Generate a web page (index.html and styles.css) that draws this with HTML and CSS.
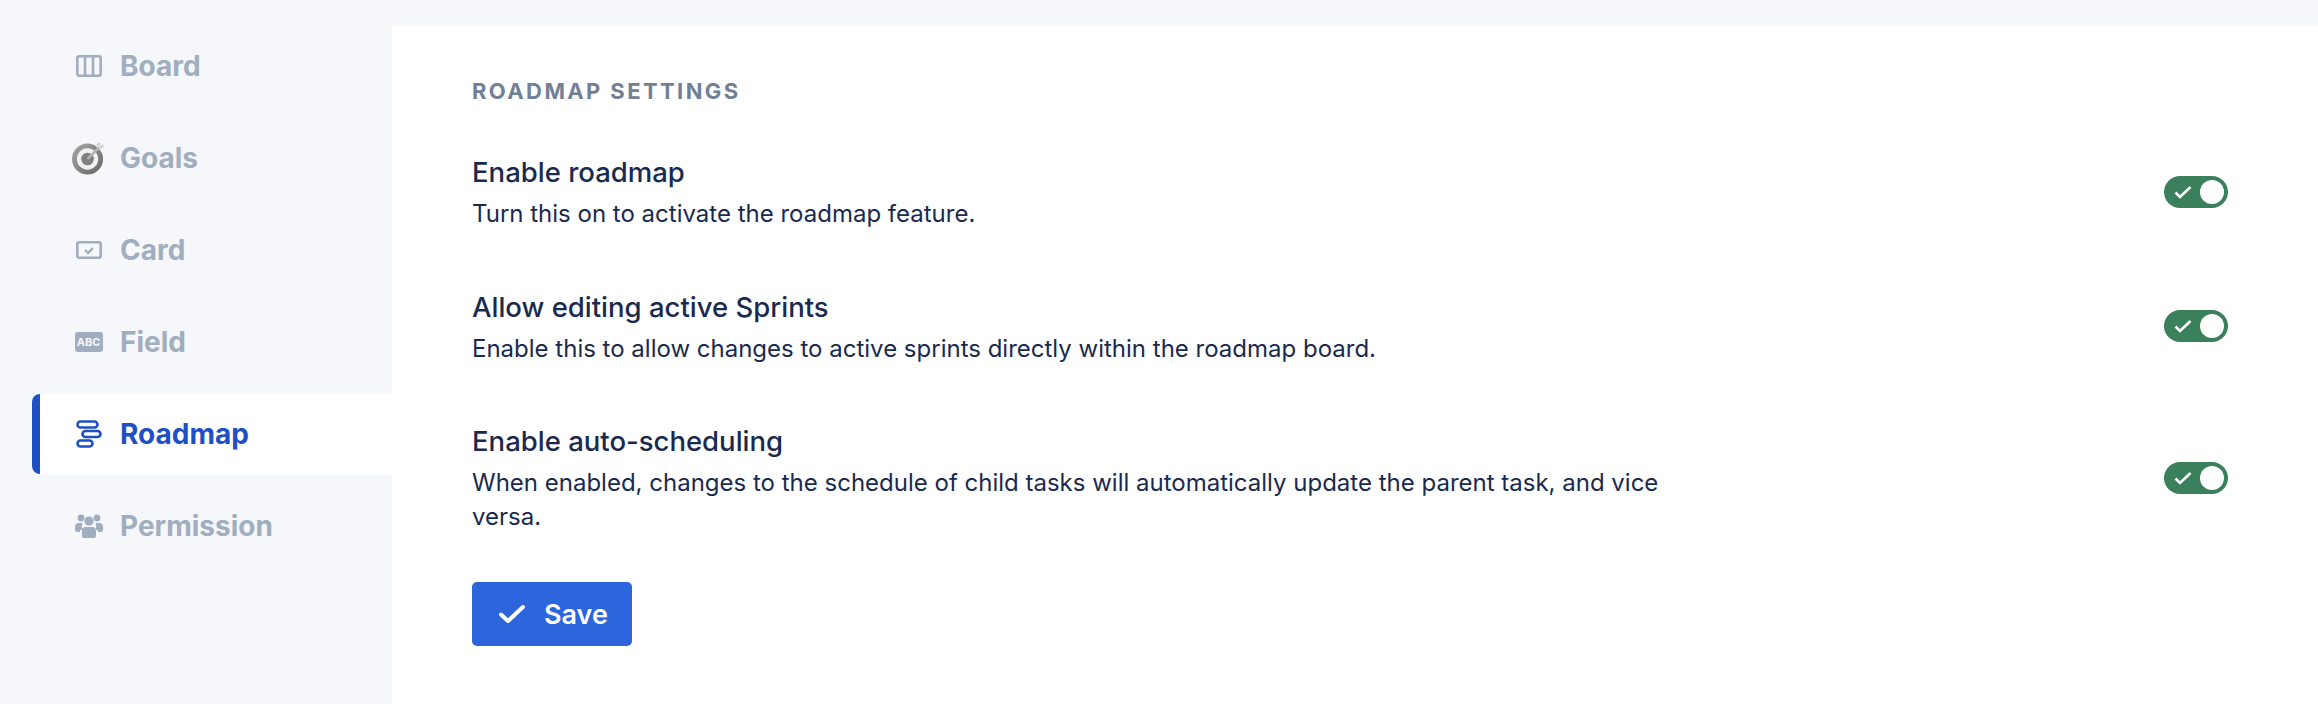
FILE: index.html
```html
<!DOCTYPE html>
<html lang="en">
<head>
<meta charset="utf-8">
<title>Roadmap settings</title>
<link rel="stylesheet" href="styles.css">
</head>
<body>
<div class="layout">
  <nav class="sidebar">
    <a class="nav-item">
      <span class="nav-icon"><svg width="28" height="24" viewBox="0 0 28 24" fill="none" stroke="currentColor" stroke-width="2.6"><rect x="2.3" y="2.3" width="23.4" height="19.4" rx="2"/><path d="M10 2v20M18 2v20"/></svg></span>
      <span>Board</span>
    </a>
    <a class="nav-item">
      <span class="nav-icon"><svg width="34" height="34" viewBox="0 0 34 34" fill="none"><defs><linearGradient id="ring" x1="0" y1="0" x2="1" y2="1"><stop offset="0" stop-color="#a8a8a8"/><stop offset="1" stop-color="#666"/></linearGradient></defs><circle cx="16" cy="18" r="16" fill="url(#ring)"/><circle cx="16" cy="18" r="11" fill="#f1f1f1"/><circle cx="16" cy="18" r="6.5" fill="#808080"/><path d="M22 2 33 13V2z" fill="#f5f7fa"/><path d="M16 18 28 6" stroke="#b5b5b5" stroke-width="2.6"/><path d="M26 4.5 29 1.5M28.5 7 32.5 4" stroke="#d2d2d2" stroke-width="3"/></svg></span>
      <span>Goals</span>
    </a>
    <a class="nav-item">
      <span class="nav-icon"><svg width="26" height="18" viewBox="0 0 26 18" fill="none" stroke="currentColor"><rect x="1.3" y="1.3" width="23.4" height="15.4" rx="2" stroke-width="2.6"/><path d="M9 9l3 3 5-5" stroke-width="2.4"/></svg></span>
      <span>Card</span>
    </a>
    <a class="nav-item">
      <span class="nav-icon abc">ABC</span>
      <span>Field</span>
    </a>
    <a class="nav-item active">
      <span class="nav-icon"><svg width="26" height="28" viewBox="0 0 26 28" fill="none" stroke="currentColor" stroke-width="2.6"><rect x="1.5" y="1.5" width="20" height="6" rx="3"/><rect x="6.5" y="11" width="18" height="6" rx="3"/><rect x="1.5" y="20.5" width="15" height="6" rx="3"/></svg></span>
      <span>Roadmap</span>
    </a>
    <a class="nav-item">
      <span class="nav-icon"><svg width="28" height="24" viewBox="0 0 28 24" fill="currentColor"><circle cx="6" cy="4" r="3.4"/><circle cx="22" cy="4" r="3.4"/><circle cx="14" cy="7" r="4.6"/><path d="M0 13a4 4 0 0 1 4-4h3.5a7 7 0 0 0 .5 7H5v2H2a2 2 0 0 1-2-2zM28 13a4 4 0 0 0-4-4h-3.5a7 7 0 0 1-.5 7h3v2h3a2 2 0 0 0 2-2zM7 17a4 4 0 0 1 4-4h6a4 4 0 0 1 4 4v5a2 2 0 0 1-2 2H9a2 2 0 0 1-2-2z"/></svg></span>
      <span>Permission</span>
    </a>
  </nav>
  <main class="panel">
    <h2 class="heading">ROADMAP SETTINGS</h2>
    <section class="setting">
      <div class="setting-text">
        <h3 class="setting-title">Enable roadmap</h3>
        <p class="setting-desc">Turn this on to activate the roadmap feature.</p>
      </div>
      <span class="toggle"><svg width="18" height="14" viewBox="0 0 18 14" fill="none" stroke="#fff" stroke-width="2.6"><path d="M1.5 7.5 6 12 16.5 2"/></svg><span class="knob"></span></span>
    </section>
    <section class="setting">
      <div class="setting-text">
        <h3 class="setting-title">Allow editing active Sprints</h3>
        <p class="setting-desc">Enable this to allow changes to active sprints directly within the roadmap board.</p>
      </div>
      <span class="toggle"><svg width="18" height="14" viewBox="0 0 18 14" fill="none" stroke="#fff" stroke-width="2.6"><path d="M1.5 7.5 6 12 16.5 2"/></svg><span class="knob"></span></span>
    </section>
    <section class="setting last">
      <div class="setting-text">
        <h3 class="setting-title">Enable auto-scheduling</h3>
        <p class="setting-desc">When enabled, changes to the schedule of child tasks will automatically update the parent task, and vice versa.</p>
      </div>
      <span class="toggle"><svg width="18" height="14" viewBox="0 0 18 14" fill="none" stroke="#fff" stroke-width="2.6"><path d="M1.5 7.5 6 12 16.5 2"/></svg><span class="knob"></span></span>
    </section>
    <button class="save" type="button"><svg width="26" height="20" viewBox="0 0 26 20" fill="none" stroke="#fff" stroke-width="4" stroke-linecap="round" stroke-linejoin="round"><path d="M2 10.5 9 17 24 3"/></svg><span>Save</span></button>
  </main>
</div>
</body>
</html>
```
FILE: styles.css
```css
* { box-sizing: border-box; }
html, body { margin: 0; height: 100%; }
body {
  background: #f5f7fa;
  font-family: Inter, "Liberation Sans", sans-serif;
  overflow: hidden;
}
.layout {
  display: flex;
  height: 704px;
  padding-top: 26px;
}
.sidebar {
  width: 392px;
  flex: none;
  padding-left: 32px;
  display: flex;
  flex-direction: column;
  gap: 12px;
}
.nav-item {
  height: 80px;
  display: flex;
  align-items: center;
  gap: 15px;
  padding-left: 40px;
  font-size: 28px;
  font-weight: 700;
  color: #a0aec0;
}
.nav-icon {
  width: 33px;
  display: flex;
  justify-content: center;
  align-items: center;
}
.abc {
  flex: none;
  width: 28px;
  height: 20px;
  margin: 0 2.5px;
  border-radius: 3px;
  background: #a0aec0;
  color: #f5f7fa;
  font-size: 11px;
  font-weight: 700;
}
.active {
  background: #fff;
  color: #1f4fc4;
  border-left: 8px solid #1f4fc4;
  border-radius: 8px 0 0 8px;
  padding-left: 32px;
}
.panel {
  flex: 1;
  background: #fff;
  padding: 51px 90px 0 80px;
}
.heading {
  margin: 0 0 48px;
  font-size: 22px;
  line-height: 28px;
  font-weight: 700;
  letter-spacing: 2.4px;
  color: #718096;
}
.setting {
  display: flex;
  justify-content: space-between;
  align-items: center;
  margin-bottom: 56.5px;
}
.setting.last { margin-bottom: 48px; }
.setting-text { width: 1200px; }
.setting-title {
  margin: 0 0 6px;
  font-size: 27.5px;
  line-height: 38px;
  font-weight: 500;
  color: #1a2a4f;
}
.setting-desc {
  margin: 0;
  font-size: 24px;
  line-height: 34px;
  font-weight: 400;
  color: #1a2a4f;
}
.toggle {
  width: 64px;
  height: 32px;
  flex: none;
  margin-top: -1px;
  border-radius: 16px;
  background: #3b805d;
  display: flex;
  align-items: center;
  justify-content: space-between;
  padding: 0 4px 0 10px;
}
.knob {
  width: 24px;
  height: 24px;
  border-radius: 50%;
  background: #fff;
}
.save {
  width: 160px;
  height: 64px;
  border: 0;
  border-radius: 5px;
  background: #2d65dc;
  color: #fff;
  font: 600 27px Inter, "Liberation Sans", sans-serif;
  display: flex;
  align-items: center;
  gap: 19px;
  padding: 0 0 0 27px;
}
```
